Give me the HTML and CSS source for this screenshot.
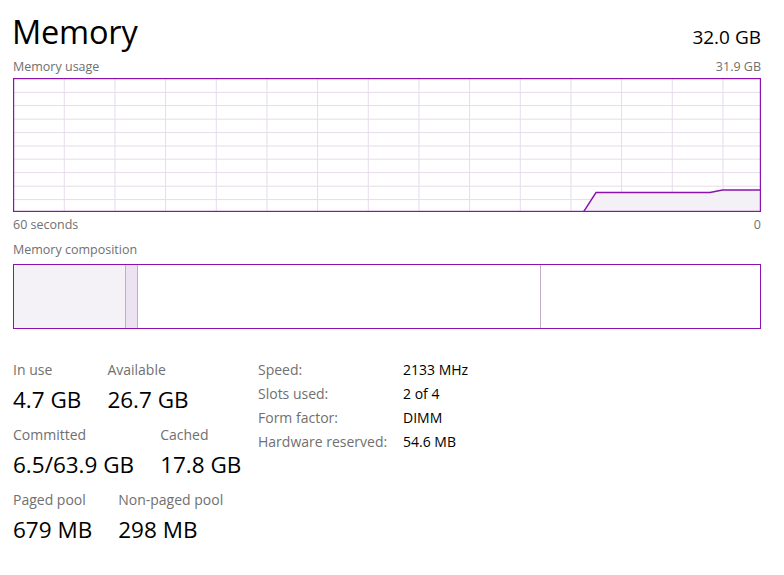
FILE: index.html
```html
<!DOCTYPE html>
<html lang="en">

<head>
  <meta charset="UTF-8">
  <title>Memory</title>
  <link rel="stylesheet" href="styles.css">
</head>

<body>
  <main class="perf">
    <header class="perf__head">
      <h1 class="perf__title">Memory</h1>
      <div class="perf__total">32.0 GB</div>
    </header>

    <div class="caption">
      <span>Memory usage</span>
      <span>31.9 GB</span>
    </div>
    <svg class="chart" width="748" height="134" viewBox="0 0 748 134">
      <g class="chart__grid">
        <line x1="51.3" y1="0" x2="51.3" y2="134" />
        <line x1="102" y1="0" x2="102" y2="134" />
        <line x1="152.6" y1="0" x2="152.6" y2="134" />
        <line x1="203.3" y1="0" x2="203.3" y2="134" />
        <line x1="254" y1="0" x2="254" y2="134" />
        <line x1="304.6" y1="0" x2="304.6" y2="134" />
        <line x1="355.3" y1="0" x2="355.3" y2="134" />
        <line x1="406" y1="0" x2="406" y2="134" />
        <line x1="456.6" y1="0" x2="456.6" y2="134" />
        <line x1="507.3" y1="0" x2="507.3" y2="134" />
        <line x1="558" y1="0" x2="558" y2="134" />
        <line x1="608.6" y1="0" x2="608.6" y2="134" />
        <line x1="659.3" y1="0" x2="659.3" y2="134" />
        <line x1="710" y1="0" x2="710" y2="134" />
        <line x1="0" y1="14.4" x2="748" y2="14.4" />
        <line x1="0" y1="27.6" x2="748" y2="27.6" />
        <line x1="0" y1="41.2" x2="748" y2="41.2" />
        <line x1="0" y1="54.6" x2="748" y2="54.6" />
        <line x1="0" y1="68" x2="748" y2="68" />
        <line x1="0" y1="81.2" x2="748" y2="81.2" />
        <line x1="0" y1="94.6" x2="748" y2="94.6" />
        <line x1="0" y1="108.2" x2="748" y2="108.2" />
        <line x1="0" y1="121.6" x2="748" y2="121.6" />
      </g>
      <polygon class="chart__area" points="570.5,134 583,114.5 697,114.5 709.5,112 748,112 748,134" />
      <polyline class="chart__line" points="570.5,134 583,114.5 697,114.5 709.5,112 748,112" />
      <rect class="chart__frame" x="0.5" y="0.5" width="747" height="133" />
    </svg>
    <div class="caption caption--below">
      <span>60 seconds</span>
      <span>0</span>
    </div>

    <div class="caption caption--section">
      <span>Memory composition</span>
    </div>
    <div class="composition">
      <div class="composition__seg composition__seg--inuse" style="width: 111px"></div>
      <div class="composition__seg composition__seg--modified" style="width: 11px"></div>
      <div class="composition__seg composition__seg--standby" style="width: 402px"></div>
      <div class="composition__seg composition__seg--free"></div>
    </div>

    <section class="details">
      <div class="stats">
        <div class="stats__row">
          <div class="stat">
            <div class="stat__label">In use</div>
            <div class="stat__value">4.7 GB</div>
          </div>
          <div class="stat">
            <div class="stat__label">Available</div>
            <div class="stat__value">26.7 GB</div>
          </div>
        </div>
        <div class="stats__row">
          <div class="stat">
            <div class="stat__label">Committed</div>
            <div class="stat__value">6.5/63.9 GB</div>
          </div>
          <div class="stat">
            <div class="stat__label">Cached</div>
            <div class="stat__value">17.8 GB</div>
          </div>
        </div>
        <div class="stats__row">
          <div class="stat">
            <div class="stat__label">Paged pool</div>
            <div class="stat__value">679 MB</div>
          </div>
          <div class="stat">
            <div class="stat__label">Non-paged pool</div>
            <div class="stat__value">298 MB</div>
          </div>
        </div>
      </div>

      <dl class="specs">
        <dt>Speed:</dt>
        <dd>2133 MHz</dd>
        <dt>Slots used:</dt>
        <dd>2 of 4</dd>
        <dt>Form factor:</dt>
        <dd>DIMM</dd>
        <dt>Hardware reserved:</dt>
        <dd>54.6 MB</dd>
      </dl>
    </section>
  </main>
</body>

</html>
```

FILE: styles.css
```css
html,
body {
  margin: 0;
  background: #fff;
}

body {
  font-family: "Open Sans", "Noto Sans", sans-serif;
  color: #000;
}

.perf {
  width: 748px;
  padding: 9px 0 0 13px;
}

.perf__head {
  display: flex;
  justify-content: space-between;
  align-items: baseline;
  margin-bottom: 3px;
}

.perf__title {
  margin: 0 0 0 -1px;
  font-size: 32.5px;
  font-weight: 400;
  line-height: 46px;
  letter-spacing: -0.2px;
}

.perf__total {
  font-size: 19px;
}

.caption {
  display: flex;
  justify-content: space-between;
  font-size: 12.5px;
  line-height: 18px;
  padding-bottom: 2px;
  color: #707070;
}

.caption--below {
  margin-top: 4px;
}

.caption--section {
  margin-top: 5px;
  padding-bottom: 5px;
}

.chart {
  display: block;
}

.chart__grid line {
  stroke: #e6dcec;
  stroke-width: 1;
}

.chart__area {
  fill: #f3f0f6;
}

.chart__line {
  fill: none;
  stroke: #8b12ae;
  stroke-width: 1.4;
}

.chart__frame {
  fill: none;
  stroke: #8b12ae;
  stroke-width: 1.4;
}

.composition {
  display: flex;
  height: 63px;
  border: 1.4px solid #8b12ae;
}

.composition__seg {
  flex: none;
}

.composition__seg--inuse {
  background: #f4f2f6;
  border-right: 1px solid #c2aecb;
}

.composition__seg--modified {
  background: #ece2f1;
  border-right: 1px solid #c2aecb;
}

.composition__seg--standby {
  border-right: 1px solid #c2aecb;
}

.composition__seg--free {
  flex: 1;
}

.details {
  display: flex;
  margin-top: 31px;
}

.stats {
  display: flex;
  flex-direction: column;
  gap: 6px;
  width: 245px;
}

.stats__row {
  display: flex;
  gap: 26px;
}

.stat__label {
  font-size: 14px;
  line-height: 20px;
  color: #707070;
}

.stat__value {
  font-size: 22.5px;
  line-height: 39px;
}

.specs {
  display: grid;
  grid-template-columns: 145px auto;
  grid-auto-rows: 24px;
  align-content: start;
  margin: -2px 0 0;
  font-size: 14px;
  line-height: 24px;
}

.specs dt {
  color: #707070;
}

.specs dd {
  margin: 0;
}
```
